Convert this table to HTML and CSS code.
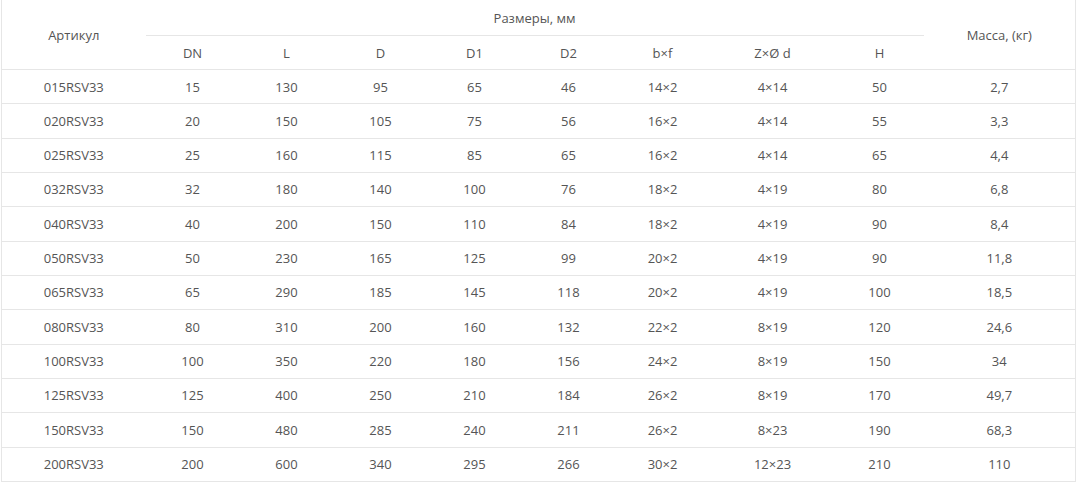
FILE: index.html
```html
<!DOCTYPE html>
<html lang="ru">
<head>
<meta charset="utf-8">
<link rel="stylesheet" href="styles.css">
</head>
<body>
<table class="spec">
<colgroup>
<col class="c-art"><col class="c-n"><col class="c-n"><col class="c-n"><col class="c-n"><col class="c-n"><col class="c-n"><col class="c-z"><col class="c-h"><col class="c-m">
</colgroup>
<thead>
<tr class="hr1"><th rowspan="2">Артикул</th><th colspan="8" class="grp">Размеры, мм</th><th rowspan="2">Масса, (кг)</th></tr>
<tr class="hr2"><th>DN</th><th>L</th><th>D</th><th>D1</th><th>D2</th><th>b×f</th><th>Z×Ø d</th><th>H</th></tr>
</thead>
<tbody>
<tr><td>015RSV33</td><td>15</td><td>130</td><td>95</td><td>65</td><td>46</td><td>14×2</td><td>4×14</td><td>50</td><td>2,7</td></tr>
<tr><td>020RSV33</td><td>20</td><td>150</td><td>105</td><td>75</td><td>56</td><td>16×2</td><td>4×14</td><td>55</td><td>3,3</td></tr>
<tr><td>025RSV33</td><td>25</td><td>160</td><td>115</td><td>85</td><td>65</td><td>16×2</td><td>4×14</td><td>65</td><td>4,4</td></tr>
<tr><td>032RSV33</td><td>32</td><td>180</td><td>140</td><td>100</td><td>76</td><td>18×2</td><td>4×19</td><td>80</td><td>6,8</td></tr>
<tr><td>040RSV33</td><td>40</td><td>200</td><td>150</td><td>110</td><td>84</td><td>18×2</td><td>4×19</td><td>90</td><td>8,4</td></tr>
<tr><td>050RSV33</td><td>50</td><td>230</td><td>165</td><td>125</td><td>99</td><td>20×2</td><td>4×19</td><td>90</td><td>11,8</td></tr>
<tr><td>065RSV33</td><td>65</td><td>290</td><td>185</td><td>145</td><td>118</td><td>20×2</td><td>4×19</td><td>100</td><td>18,5</td></tr>
<tr><td>080RSV33</td><td>80</td><td>310</td><td>200</td><td>160</td><td>132</td><td>22×2</td><td>8×19</td><td>120</td><td>24,6</td></tr>
<tr><td>100RSV33</td><td>100</td><td>350</td><td>220</td><td>180</td><td>156</td><td>24×2</td><td>8×19</td><td>150</td><td>34</td></tr>
<tr><td>125RSV33</td><td>125</td><td>400</td><td>250</td><td>210</td><td>184</td><td>26×2</td><td>8×19</td><td>170</td><td>49,7</td></tr>
<tr><td>150RSV33</td><td>150</td><td>480</td><td>285</td><td>240</td><td>211</td><td>26×2</td><td>8×23</td><td>190</td><td>68,3</td></tr>
<tr><td>200RSV33</td><td>200</td><td>600</td><td>340</td><td>295</td><td>266</td><td>30×2</td><td>12×23</td><td>210</td><td>110</td></tr>
</tbody>
</table>
</body>
</html>
```
FILE: styles.css
```css
html, body {
  margin: 0;
  padding: 0;
  background: #fff;
}
body {
  padding-left: 1px;
}
.spec {
  width: 1074px;
  border-collapse: collapse;
  table-layout: fixed;
  font-family: "Open Sans", "Liberation Sans", sans-serif;
  font-size: 13px;
  color: #555;
  border-left: 1px solid #e6e6e6;
  border-right: 1px solid #e6e6e6;
}
.c-art { width: 144px; }
.c-n { width: 94px; }
.c-z { width: 126px; }
.c-h { width: 88px; }
.c-m { width: 152px; }
.spec th {
  font-weight: normal;
  text-align: center;
  padding: 0 4px;
  line-height: 18px;
}
.hr1 th { height: 35px; }
.hr2 th { height: 33px; border-bottom: 1px solid #e6e6e6; }
.hr1 th[rowspan] { border-bottom: 1px solid #e6e6e6; }
.grp { border-bottom: 1px solid #e6e6e6; }
.spec td {
  text-align: center;
  padding: 7.5px 4px;
  line-height: 18.33px;
  border-bottom: 1px solid #e6e6e6;
}
```
